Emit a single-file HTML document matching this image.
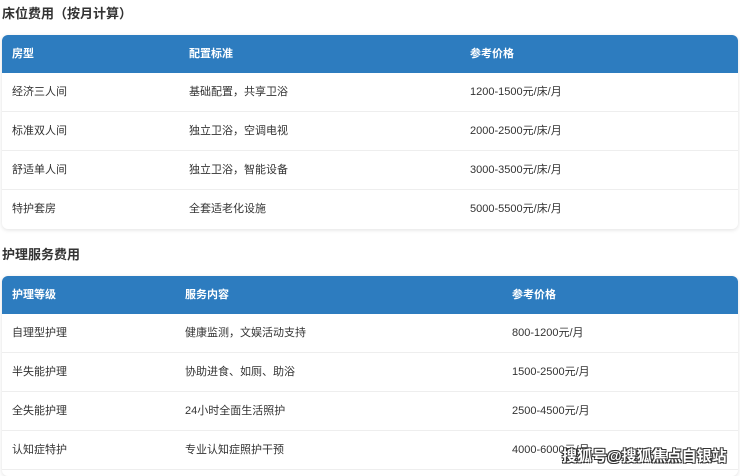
<!DOCTYPE html>
<html><head><meta charset="utf-8"><style>
*{margin:0;padding:0;box-sizing:border-box}
body{width:740px;height:470px;background:#fff;font-family:"Liberation Sans","Noto Sans CJK SC",sans-serif;color:#333;position:relative;overflow:hidden}
h3{position:absolute;left:2px;font-size:13px;font-weight:bold;color:#333}
.t{position:absolute;left:2px;width:736px;border-radius:6px;overflow:hidden;box-shadow:0 1px 4px rgba(0,0,0,.12);background:#fff}
.r{height:39px;position:relative;border-bottom:1px solid #eee;font-size:11px}
.r span{position:absolute;top:0;line-height:38px}
.h{background:#2d7cbf;color:#fff;font-weight:bold;height:38px;border-bottom:none}
.wm{position:absolute;left:562px;top:445px;font-size:15px;font-weight:bold;color:#fff;text-shadow:-1px -1px 0 #333,1px -1px 0 #333,-1px 1px 0 #333,1px 1px 0 #333;letter-spacing:0}
</style></head><body>
<h3 style="top:3px">床位费用（按月计算）</h3>
<div class="t" style="top:35px">
<div class="r h"><span style="left:10px">房型</span><span style="left:187px">配置标准</span><span style="left:468px">参考价格</span></div>
<div class="r"><span style="left:10px">经济三人间</span><span style="left:187px">基础配置，共享卫浴</span><span style="left:468px">1200-1500元/床/月</span></div>
<div class="r"><span style="left:10px">标准双人间</span><span style="left:187px">独立卫浴，空调电视</span><span style="left:468px">2000-2500元/床/月</span></div>
<div class="r"><span style="left:10px">舒适单人间</span><span style="left:187px">独立卫浴，智能设备</span><span style="left:468px">3000-3500元/床/月</span></div>
<div class="r" style="border:none"><span style="left:10px">特护套房</span><span style="left:187px">全套适老化设施</span><span style="left:468px">5000-5500元/床/月</span></div>
</div>
<h3 style="top:244px">护理服务费用</h3>
<div class="t" style="top:276px;height:200px">
<div class="r h"><span style="left:10px">护理等级</span><span style="left:183px">服务内容</span><span style="left:510px">参考价格</span></div>
<div class="r"><span style="left:10px">自理型护理</span><span style="left:183px">健康监测，文娱活动支持</span><span style="left:510px">800-1200元/月</span></div>
<div class="r"><span style="left:10px">半失能护理</span><span style="left:183px">协助进食、如厕、助浴</span><span style="left:510px">1500-2500元/月</span></div>
<div class="r"><span style="left:10px">全失能护理</span><span style="left:183px">24小时全面生活照护</span><span style="left:510px">2500-4500元/月</span></div>
<div class="r"><span style="left:10px">认知症特护</span><span style="left:183px">专业认知症照护干预</span><span style="left:510px">4000-6000元/月</span></div>
</div>
<div class="wm">搜狐号@搜狐焦点自银站</div>
</body></html>
